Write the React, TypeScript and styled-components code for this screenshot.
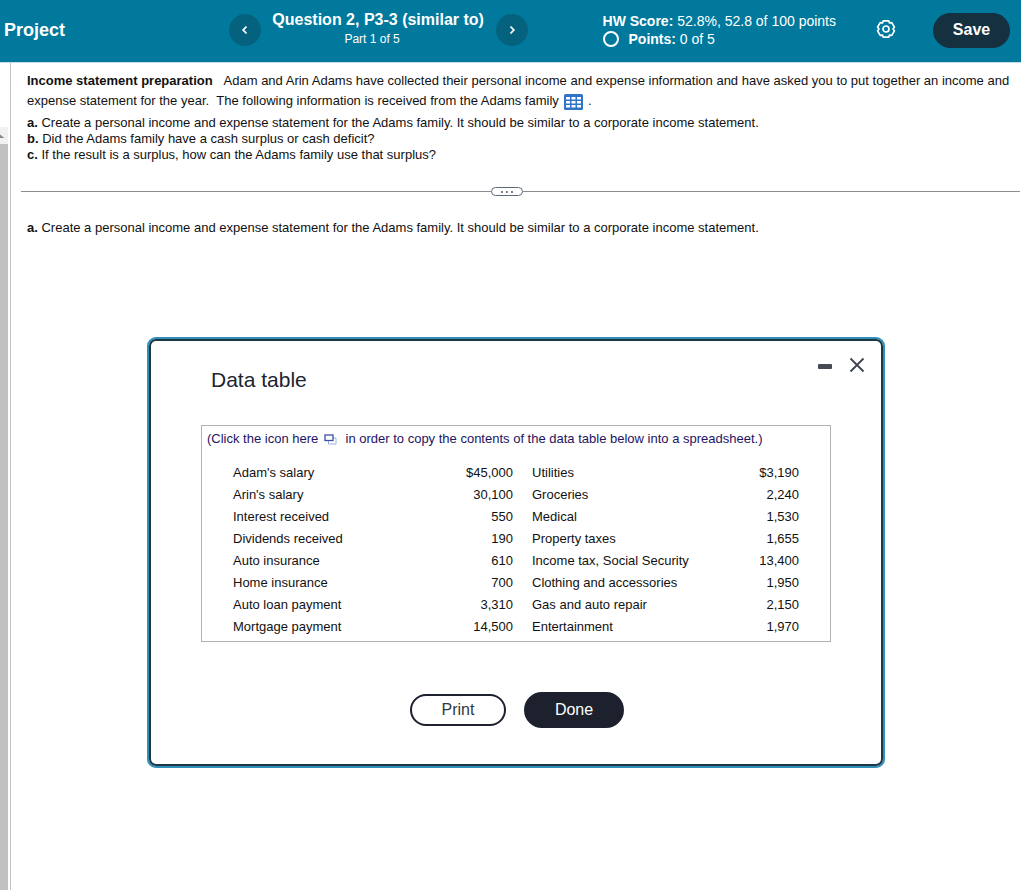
import React from "react";
import styled, { createGlobalStyle } from "styled-components";

const GlobalStyle = createGlobalStyle`
  *, *::before, *::after { box-sizing: border-box; }
  body {
    margin: 0;
    background: #fff;
    color: #111;
    font-family: "Liberation Sans", Arial, sans-serif;
    font-size: 13px;
    line-height: 16px;
  }
  button { font-family: inherit; cursor: pointer; }
`;

const Page = styled.div`
  display: flex;
  flex-direction: column;
  min-height: 100vh;
`;

const Header = styled.header`
  display: grid;
  grid-template-columns: 3fr auto 1fr auto;
  align-items: center;
  height: 63px;
  padding: 0 11px 2px 4px;
  border-bottom: 1px solid #c3dde6;
  background: #00799d;
  color: #fff;
`;

const ProjectTitle = styled.h1`
  margin: 0;
  font-size: 18px;
  line-height: 22px;
`;

const QuestionNav = styled.nav`
  display: flex;
  align-items: center;
  justify-content: space-between;
  width: 299px;
`;

const RoundButton = styled.button`
  display: grid;
  place-items: center;
  width: 32px;
  height: 32px;
  padding: 0;
  border: 0;
  border-radius: 50%;
  background: #05627f;
  color: #fff;
`;

const QuestionLabel = styled.div`
  padding-bottom: 2px;
  white-space: nowrap;
`;

const QuestionTitle = styled.h2`
  margin: 0;
  font-size: 16px;
  line-height: 20px;
`;

const QuestionPart = styled.p`
  margin: 0;
  padding-right: 12px;
  font-size: 12px;
  line-height: 18px;
  text-align: center;
`;

const Status = styled.div`
  grid-column: 4;
  display: flex;
  align-items: center;
`;

const Scores = styled.div`
  font-size: 14px;
  line-height: 18px;
  white-space: nowrap;
`;

const PointsRow = styled.div`
  display: flex;
  align-items: center;
  gap: 10px;
`;

const GearButton = styled.button`
  display: grid;
  place-items: center;
  margin: 0 37px 2px 40px;
  padding: 0;
  border: 0;
  background: none;
  color: #fff;
`;

const SaveButton = styled.button`
  width: 77px;
  height: 35px;
  padding: 0;
  border: 0;
  border-radius: 18px;
  background: #15303f;
  color: #fff;
  font-size: 16px;
  font-weight: 700;
`;

const Body = styled.div`
  display: flex;
  flex: 1;
`;

const ScrollRail = styled.div`
  display: flex;
  flex-direction: column;
  width: 11px;
  padding: 64px 2px 0 0;
  border-right: 1px solid #c4c4c4;
`;

const RailArrow = styled.div`
  height: 17px;
  padding-top: 7px;
  background: #f1f1f1;
  svg { display: block; }
`;

const RailThumb = styled.div`
  flex: 1;
  background: #c1c1c1;
`;

const Main = styled.main`
  flex: 1;
  min-width: 0;
  padding-top: 8px;
`;

const Prompt = styled.section`
  padding: 0 8px 0 16px;
`;

const Intro = styled.p`
  margin: 0 0 4px;
  line-height: 20px;
`;

const IntroTopic = styled.strong`
  margin-right: 8px;
`;

const TableLink = styled.button`
  margin: 0 1px 0 2px;
  padding: 0;
  border: 0;
  background: none;
  line-height: 16px;
  vertical-align: -5px;
  svg { display: block; }
`;

const Line = styled.p`
  margin: 0;
`;

const Divider = styled.div`
  display: flex;
  align-items: center;
  margin: 24px 1px 24px 10px;
  &::before, &::after {
    content: "";
    height: 1px;
    background: #8b8d92;
  }
  &::before { flex: 470; }
  &::after { flex: 497; }
`;

const DividerHandle = styled.button`
  display: flex;
  align-items: center;
  justify-content: center;
  gap: 3px;
  width: 32px;
  height: 9px;
  padding: 0;
  border: 1px solid #5d6a7c;
  border-radius: 5px;
  background: #fff;
`;

const Dot = styled.span`
  width: 2px;
  height: 2px;
  border-radius: 1px;
  background: #4b5b70;
`;

const Dialog = styled.section`
  width: 734px;
  max-width: calc(100% - 24px);
  margin: 103px auto 0;
  padding: 16px 50px 36px;
  border: 2px solid #1c3644;
  border-radius: 7px;
  box-shadow: 0 0 0 2px #2d8fba;
`;

const DialogBar = styled.div`
  display: flex;
  justify-content: space-between;
  margin: 0 -34px 0 10px;
`;

const DialogTitle = styled.h2`
  margin: 11px 0 0;
  color: #1c2430;
  font-size: 21px;
  font-weight: 400;
  line-height: 24px;
`;

const WindowControls = styled.div`
  display: flex;
  align-items: flex-start;
  gap: 16px;
`;

const IconButton = styled.button`
  padding: 0;
  border: 0;
  background: none;
  svg { display: block; }
`;

const DataBox = styled.div`
  margin-top: 33px;
  padding: 5px 31px 3px;
  border: 1px solid #b0b2b5;
`;

const CopyNote = styled.p`
  margin: 0 -26px 15px;
  color: #1d1464;
`;

const CopyButton = styled.button`
  margin: 0 5px 0 2px;
  padding: 0;
  border: 0;
  background: none;
  line-height: 12px;
  vertical-align: -2px;
  svg { display: block; }
`;

const DataTable = styled.table`
  width: 100%;
  border-collapse: collapse;
  table-layout: fixed;
`;

const Row = styled.tr`
  height: 22px;
`;

const Cell = styled.td<{ $amount?: boolean; $second?: boolean }>`
  padding: 0 0 0 ${(p) => (p.$second ? 19 : 0)}px;
  text-align: ${(p) => (p.$amount ? "right" : "left")};
`;

const Actions = styled.div`
  display: flex;
  align-items: center;
  justify-content: center;
  gap: 18px;
  margin-top: 50px;
  padding-left: 2px;
`;

const PillButton = styled.button<{ $primary?: boolean }>`
  width: ${(p) => (p.$primary ? 100 : 96)}px;
  height: ${(p) => (p.$primary ? 36 : 32)}px;
  padding: 0;
  border: 2px solid #1c212d;
  border-radius: 18px;
  background: ${(p) => (p.$primary ? "#1c212d" : "#fff")};
  color: ${(p) => (p.$primary ? "#fff" : "#333740")};
  font-size: 16px;
`;

const rows = [
  ["Adam's salary", "$45,000", "Utilities", "$3,190"],
  ["Arin's salary", "30,100", "Groceries", "2,240"],
  ["Interest received", "550", "Medical", "1,530"],
  ["Dividends received", "190", "Property taxes", "1,655"],
  ["Auto insurance", "610", "Income tax, Social Security", "13,400"],
  ["Home insurance", "700", "Clothing and accessories", "1,950"],
  ["Auto loan payment", "3,310", "Gas and auto repair", "2,150"],
  ["Mortgage payment", "14,500", "Entertainment", "1,970"],
];

const Chevron = ({ d }: { d: string }) => (
  <svg width="8" height="10" viewBox="0 0 8 10" fill="none" stroke="currentColor" strokeWidth="1.8" aria-hidden="true">
    <path d={d} />
  </svg>
);

const GearIcon = () => (
  <svg width="20" height="20" viewBox="0 0 20 20" fill="none" stroke="currentColor" strokeWidth="1.7" strokeLinejoin="round" aria-hidden="true">
    <path d="M7.3 1.8h5.4l.8 2.1 2.3-.3 2.6 4.600L17 10l1.400 1.800-2.600 4.600-2.300-.3-.8 2.100H7.300l-.8-2.100-2.300.3-2.600-4.600L3 10 1.600 8.200l2.600-4.600 2.300.3z" />
    <circle cx="10" cy="10" r="3" />
  </svg>
);

const GridIcon = () => (
  <svg width="19" height="16" viewBox="0 0 19 16" aria-hidden="true">
    <rect width="19" height="16" rx="1.5" fill="#2f74c9" />
    <g fill="#fff">
      {[3, 7, 11].map((y) => [2, 7.5, 13].map((x) => <rect key={`${x}-${y}`} x={x} y={y} width="4" height="2.5" />))}
    </g>
  </svg>
);

const CopyIcon = () => (
  <svg width="13" height="11" viewBox="0 0 13 11" fill="none" aria-hidden="true">
    <path d="M4.5 6.500v3.500h7.500V4H9" stroke="#9fb0d8" />
    <rect x="1" y="1" width="8" height="5.500" stroke="#3c4fa0" strokeWidth="1.300" fill="#fff" />
  </svg>
);

export default function App() {
  return (
    <Page>
      <GlobalStyle />
      <Header>
        <ProjectTitle>Project</ProjectTitle>
        <QuestionNav aria-label="Questions">
          <RoundButton aria-label="Previous question"><Chevron d="M5.5 1.5 2.2 5l3.3 3.5" /></RoundButton>
          <QuestionLabel>
            <QuestionTitle>Question 2, P3-3 (similar to)</QuestionTitle>
            <QuestionPart>Part 1 of 5</QuestionPart>
          </QuestionLabel>
          <RoundButton aria-label="Next question"><Chevron d="M2.5 1.5 5.8 5 2.5 8.5" /></RoundButton>
        </QuestionNav>
        <Status>
          <Scores>
            <div><strong>HW Score:</strong> 52.8%, 52.8 of 100 points</div>
            <PointsRow>
              <svg width="16" height="16" viewBox="0 0 16 16" fill="none" stroke="#fff" strokeWidth="2" aria-hidden="true">
                <circle cx="8" cy="8" r="7" />
              </svg>
              <span><strong>Points:</strong> 0 of 5</span>
            </PointsRow>
          </Scores>
          <GearButton aria-label="Settings"><GearIcon /></GearButton>
          <SaveButton>Save</SaveButton>
        </Status>
      </Header>
      <Body>
        <ScrollRail aria-hidden="true">
          <RailArrow>
            <svg width="5" height="4" viewBox="0 0 5 4"><path d="M0 0.5 L4.5 4H0z" fill="#8a8a8a" /></svg>
          </RailArrow>
          <RailThumb />
        </ScrollRail>
        <Main>
          <Prompt>
            <Intro>
              <IntroTopic>Income statement preparation</IntroTopic>{" "}
              Adam and Arin Adams have collected their personal income and expense information and have asked you to put
              together an income and expense statement for the year. &nbsp;The following information is received from the
              Adams family <TableLink aria-label="Open data table"><GridIcon /></TableLink> .
            </Intro>
            <Line><strong>a.</strong> Create a personal income and expense statement for the Adams family. It should be similar to a corporate income statement.</Line>
            <Line><strong>b.</strong> Did the Adams family have a cash surplus or cash deficit?</Line>
            <Line><strong>c.</strong> If the result is a surplus, how can the Adams family use that surplus?</Line>
          </Prompt>
          <Divider>
            <DividerHandle aria-label="Resize panels"><Dot /><Dot /><Dot /></DividerHandle>
          </Divider>
          <Prompt>
            <Line><strong>a.</strong> Create a personal income and expense statement for the Adams family. It should be similar to a corporate income statement.</Line>
          </Prompt>
          <Dialog role="dialog" aria-labelledby="data-table-title">
            <DialogBar>
              <DialogTitle id="data-table-title">Data table</DialogTitle>
              <WindowControls>
                <IconButton aria-label="Minimize">
                  <svg width="16" height="16" viewBox="0 0 16 16"><rect x="1" y="7" width="14" height="5" rx="1" fill="#464a52" /></svg>
                </IconButton>
                <IconButton aria-label="Close">
                  <svg width="16" height="16" viewBox="0 0 16 16" stroke="#3d4450" strokeWidth="1.8"><path d="M1.500 1.500l13 13M14.500 1.500l-13 13" /></svg>
                </IconButton>
              </WindowControls>
            </DialogBar>
            <DataBox>
              <CopyNote>
                (Click the icon here <CopyButton aria-label="Copy to spreadsheet"><CopyIcon /></CopyButton> in order to copy the contents of the data table below into a spreadsheet.)
              </CopyNote>
              <DataTable>
                <colgroup>
                  <col width="200" />
                  <col width="80" />
                  <col />
                  <col width="80" />
                </colgroup>
                <tbody>
                  {rows.map(([a, b, c, d]) => (
                    <Row key={a}>
                      <Cell>{a}</Cell>
                      <Cell $amount>{b}</Cell>
                      <Cell $second>{c}</Cell>
                      <Cell $amount>{d}</Cell>
                    </Row>
                  ))}
                </tbody>
              </DataTable>
            </DataBox>
            <Actions>
              <PillButton>Print</PillButton>
              <PillButton $primary>Done</PillButton>
            </Actions>
          </Dialog>
        </Main>
      </Body>
    </Page>
  );
}
